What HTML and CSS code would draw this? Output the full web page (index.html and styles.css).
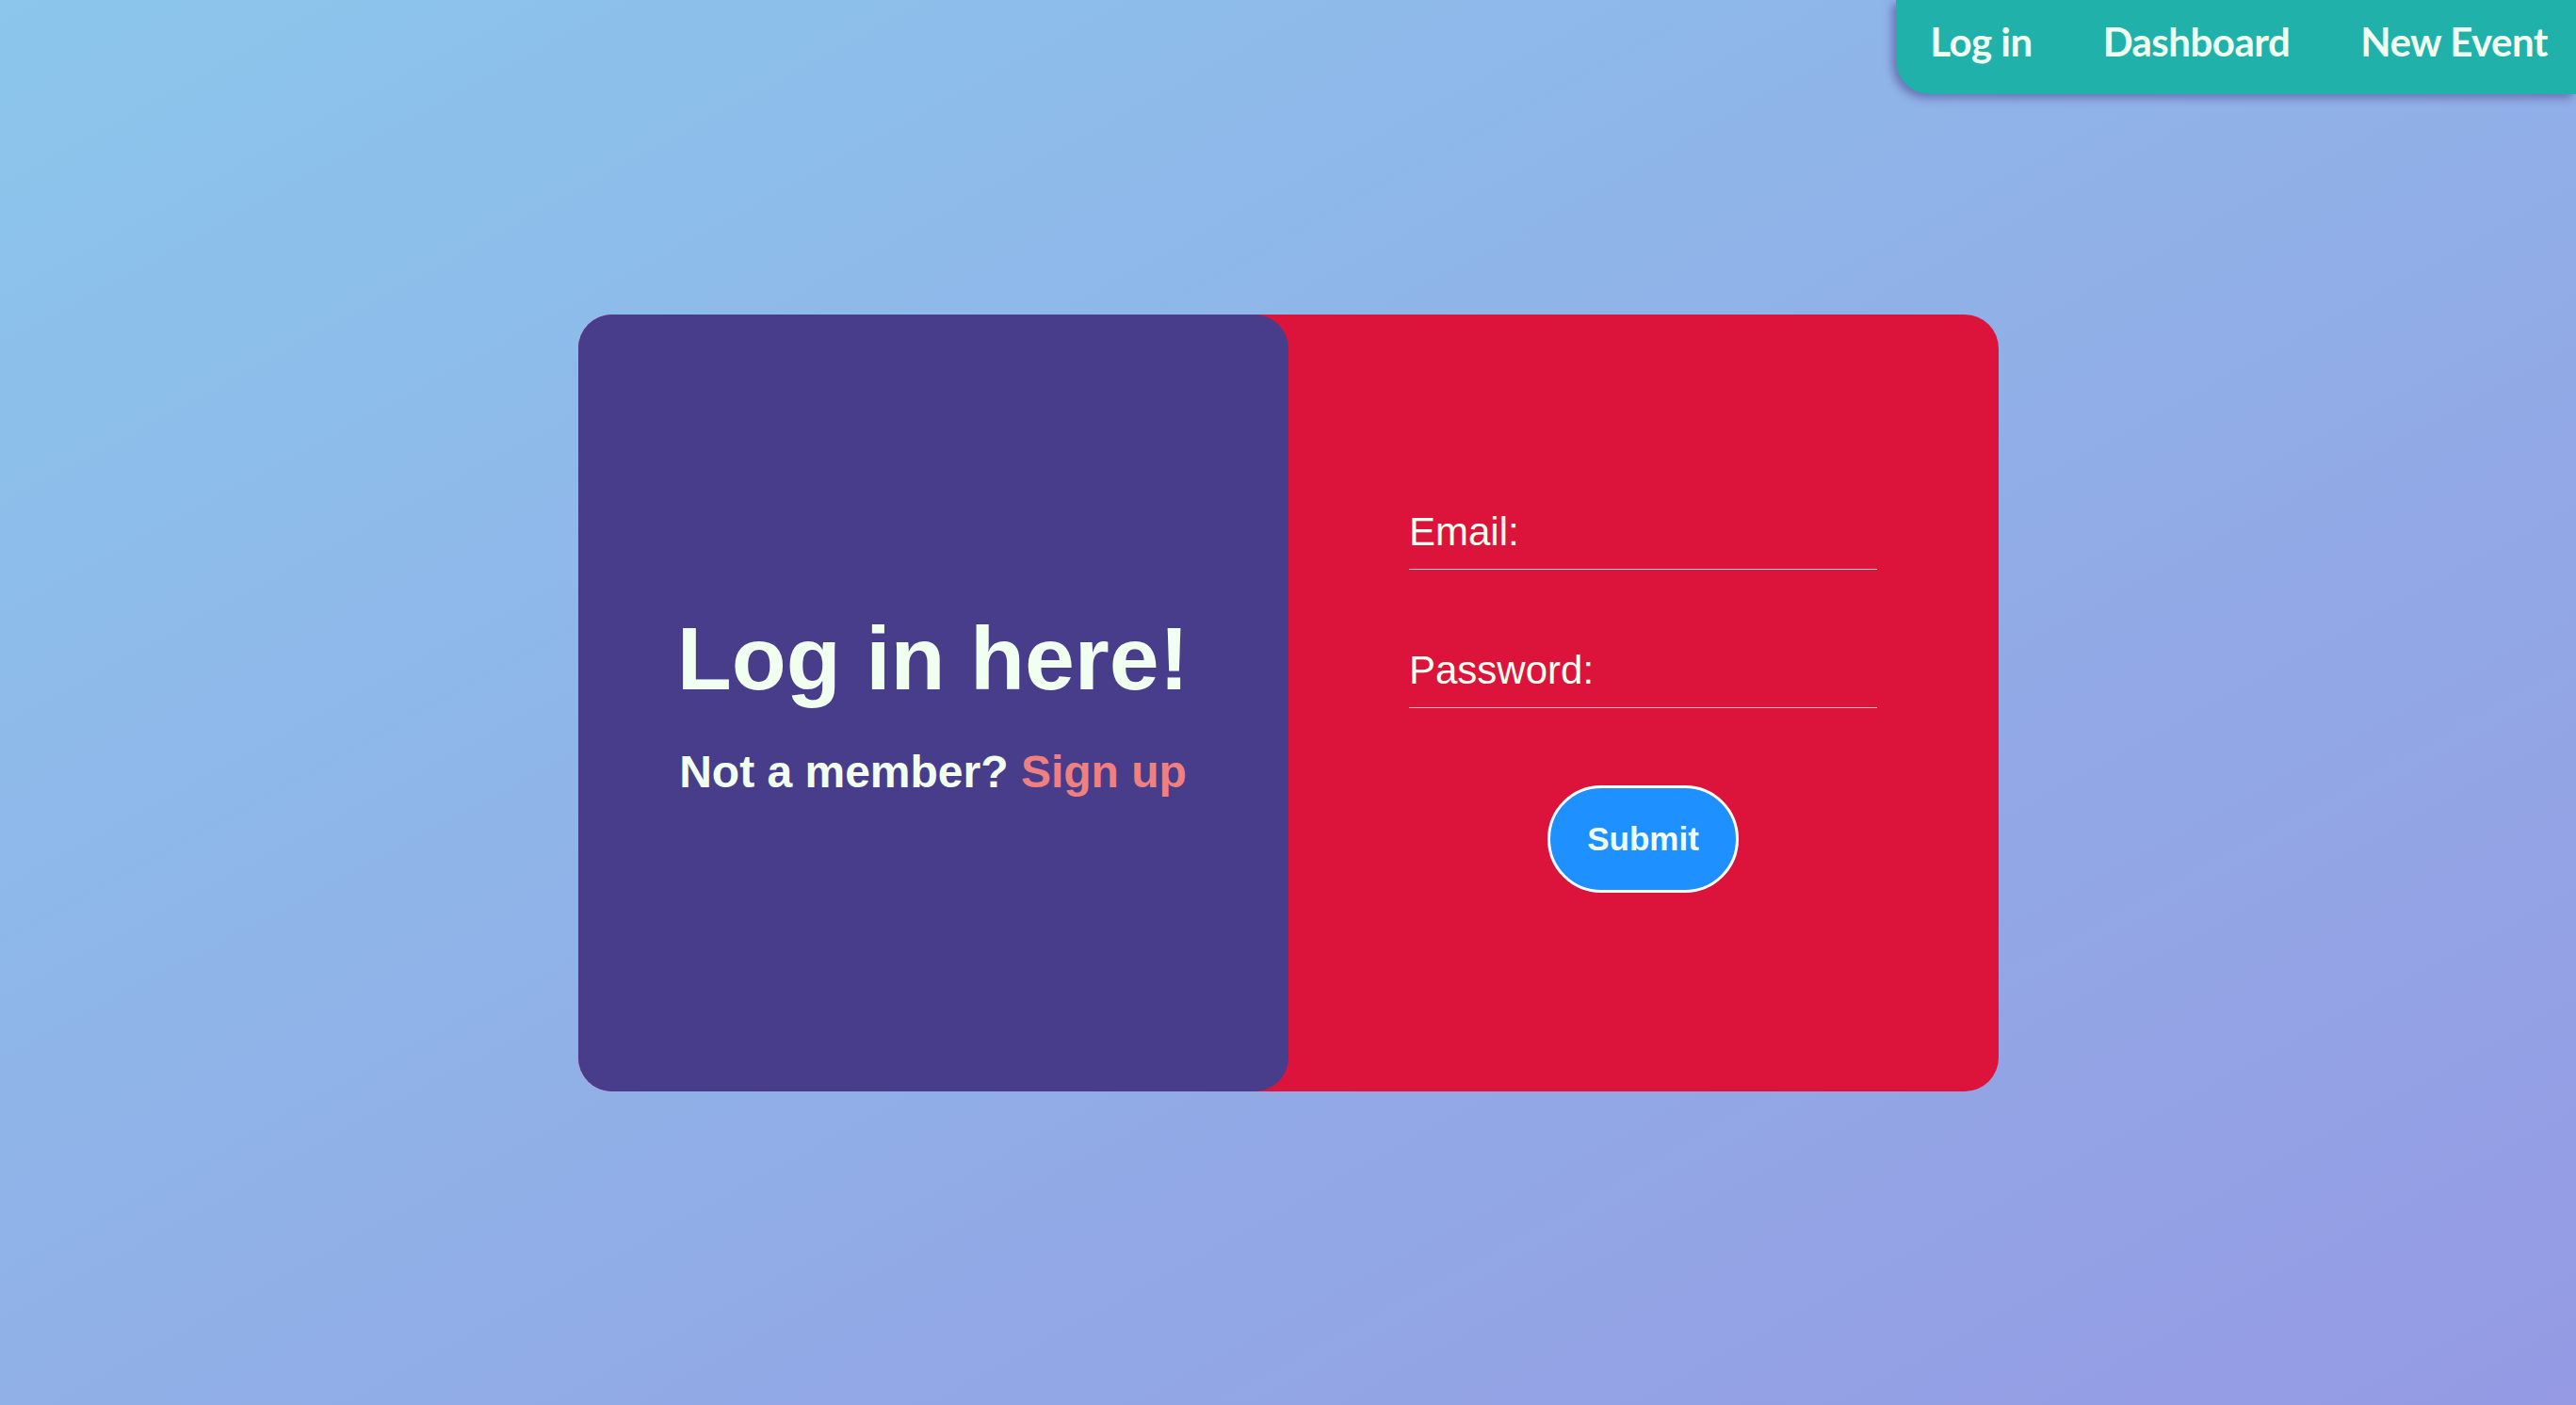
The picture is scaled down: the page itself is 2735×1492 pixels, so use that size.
FILE: index.html
```html
<!DOCTYPE html>
<html lang="en">
<head>
<meta charset="utf-8">
<title>Log in</title>
<link rel="stylesheet" href="styles.css">
</head>
<body>
  <header class="topbar">
    <nav class="nav">
      <a class="nav-link" href="#">Log in</a>
      <a class="nav-link" href="#">Dashboard</a>
      <a class="nav-link" href="#">New Event</a>
    </nav>
  </header>
  <main class="stage">
    <section class="card">
      <div class="card-intro">
        <h1 class="intro-title">Log in here!</h1>
        <p class="intro-sub">Not a member? <a class="signup" href="#">Sign up</a></p>
      </div>
      <form class="card-form">
        <input class="field" type="email" placeholder="Email:">
        <input class="field field-second" type="password" placeholder="Password:">
        <button class="submit" type="button">Submit</button>
      </form>
    </section>
  </main>
</body>
</html>
```

FILE: styles.css
```css
html, body {
  margin: 0;
  padding: 0;
}

body {
  height: 100vh;
  overflow: hidden;
  background: linear-gradient(to bottom right, #8bc6ec, #959ae3);
  font-family: "Liberation Sans", Arial, sans-serif;
  color: #f0fff0;
}

.topbar {
  height: 100px;
  display: flex;
  justify-content: flex-end;
}

.nav {
  height: 100px;
  box-sizing: border-box;
  display: flex;
  align-items: flex-start;
  gap: 75px;
  padding: 19px 30px 0 36px;
  background: #20b2aa;
  border-bottom-left-radius: 36px;
  box-shadow: -4px 4px 10px rgba(72, 61, 139, 0.55);
}

.nav-link {
  font-family: Lato, "Open Sans", sans-serif;
  font-weight: 700;
  font-size: 42px;
  color: #f0fff0;
  text-decoration: none;
  letter-spacing: -0.5px;
}

.stage {
  height: calc(100vh - 200px);
  display: flex;
  align-items: center;
  justify-content: center;
}

.card {
  width: 1508px;
  height: 825px;
  display: flex;
  background: #dc143c;
  border-radius: 36px;
}

.card-intro {
  flex: 1;
  display: flex;
  flex-direction: column;
  align-items: center;
  justify-content: center;
  background: #483d8b;
  border-radius: 36px;
}

.intro-title {
  margin: 0;
  font-size: 95px;
  font-weight: 700;
}

.intro-sub {
  margin: 38px 0 0;
  font-size: 48px;
  font-weight: 700;
}

.signup {
  color: #f08080;
  text-decoration: none;
}

.card-form {
  flex: 1;
  margin: 0;
  padding-bottom: 4px;
  display: flex;
  flex-direction: column;
  align-items: center;
  justify-content: center;
}

.field {
  width: 497px;
  box-sizing: border-box;
  margin: 0;
  padding: 0 0 15px;
  background: transparent;
  border: none;
  border-bottom: 1px solid rgba(255, 225, 230, 0.85);
  outline: none;
  font-family: "Liberation Sans", Arial, sans-serif;
  font-size: 42px;
  color: #f0fff0;
}

.field::placeholder {
  color: #f0fff0;
  opacity: 1;
}

.field-second {
  margin-top: 83px;
}

.submit {
  margin-top: 82px;
  padding: 34px 39px;
  background: #1e90ff;
  border: 3px solid #ffffff;
  border-radius: 60px;
  font-family: "Liberation Sans", Arial, sans-serif;
  font-size: 35px;
  font-weight: 700;
  color: #f0fff0;
  cursor: pointer;
}
```
